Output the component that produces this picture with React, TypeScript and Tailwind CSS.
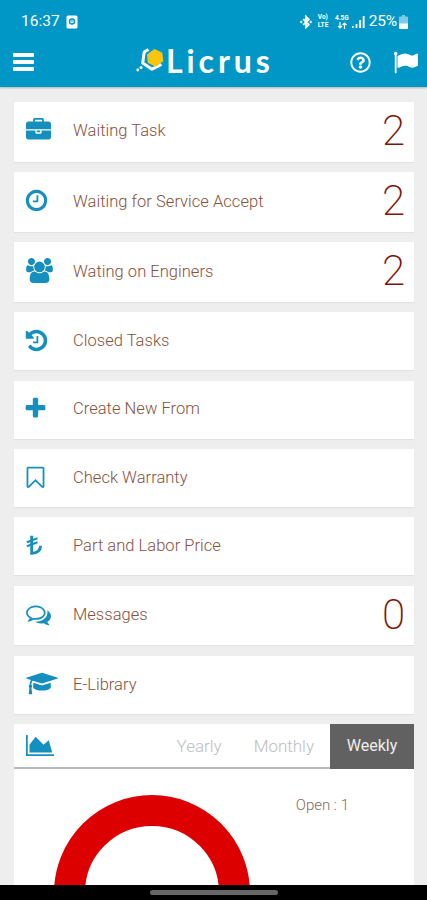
import type { ReactNode } from "react";
import { FaRegQuestionCircle } from "react-icons/fa";

interface GlyphProps {
  d: string;
  width?: number;
  className?: string;
}

// Glyphs share a 1792 unit tall grid, only the width differs
function Glyph({ d, width = 1792, className }: GlyphProps) {
  return (
    <svg viewBox={`0 0 ${width} 1792`} fill="currentColor" className={className} aria-hidden="true">
      <path d={d} />
    </svg>
  );
}

const paths = {
  briefcase:
    "M640 256h512v-128h-512v128zm1152 640v480q0 66-47 113t-113 47h-1472q-66 0-113-47t-47-113v-480h672v160q0 26 19 45t45 19h320q26 0 45-19t19-45v-160h672zm-768 0v128h-256v-128h256zm768-480v384h-1792v-384q0-66 47-113t113-47h352v-160q0-40 28-68t68-28h576q40 0 68 28t28 68v160h352q66 0 113 47t47 113z",
  clock:
    "M1024 544v448q0 14-9 23t-23 9h-320q-14 0-23-9t-9-23v-64q0-14 9-23t23-9h224v-352q0-14 9-23t23-9h64q14 0 23 9t9 23zm416 352q0-148-73-273t-198-198-273-73-273 73-198 198-73 273 73 273 198 198 273 73 273-73 198-198 73-273zm224 0q0 209-103 385.5t-279.5 279.5-385.5 103-385.5-103-279.5-279.5-103-385.5 103-385.5 279.5-279.5 385.5-103 385.5 103 279.5 279.5 103 385.5z",
  users:
    "M593 896q-162 5-265 128h-134q-82 0-138-40.5t-56-118.5q0-353 124-353 6 0 43.5 21t97.5 42.5 119 21.5q67 0 133-23-5 37-5 66 0 139 81 256zm1071 637q0 120-73 189.5t-194 69.5h-874q-121 0-194-69.5t-73-189.5q0-53 3.5-103.5t14-109 26.5-108.5 43-97.5 62-81 85.5-53.5 111.5-20q10 0 43 21.5t73 48 107 48 135 21.5 135-21.5 107-48 73-48 43-21.5q61 0 111.5 20t85.5 53.5 62 81 43 97.5 26.5 108.5 14 109 3.5 103.5zm-1024-1277q0 106-75 181t-181 75-181-75-75-181 75-181 181-75 181 75 75 181zm704 384q0 159-112.5 271.5t-271.5 112.5-271.5-112.5-112.5-271.5 112.5-271.5 271.5-112.5 271.5 112.5 112.5 271.5zm576 225q0 78-56 118.5t-138 40.5h-134q-103-123-265-128 81-117 81-256 0-29-5-66 66 23 133 23 59 0 119-21.5t97.5-42.5 43.5-21q124 0 124 353zm-128-609q0 106-75 181t-181 75-181-75-75-181 75-181 181-75 181 75 75 181z",
  history:
    "M1664 896q0 156-61 298t-164 245-245 164-298 61q-172 0-327-72.5t-264-204.5q-7-10-6.5-22.5t8.5-20.5l137-138q10-9 25-9 16 2 23 12 73 95 179 147t225 52q104 0 198.5-40.5t163.5-109.5 109.5-163.5 40.5-198.5-40.5-198.5-109.5-163.5-163.5-109.5-198.5-40.5q-98 0-188 35.5t-160 101.5l137 138q31 30 14 69-17 40-59 40h-448q-26 0-45-19t-19-45v-448q0-42 40-59 39-17 69 14l130 129q107-101 244.5-156.5t284.5-55.5q156 0 298 61t245 164 164 245 61 298zm-640-288v448q0 14-9 23t-23 9h-320q-14 0-23-9t-9-23v-64q0-14 9-23t23-9h224v-352q0-14 9-23t23-9h64q14 0 23 9t9 23z",
  plus: "M1600 736v192q0 40-28 68t-68 28h-416v416q0 40-28 68t-68 28h-192q-40 0-68-28t-28-68v-416h-416q-40 0-68-28t-28-68v-192q0-40 28-68t68-28h416v-416q0-40 28-68t68-28h192q40 0 68 28t28 68v416h416q40 0 68 28t28 68z",
  bookmark:
    "M1408 256h-1024v1242l423-406 89-85 89 85 423 406v-1242zm12-128q23 0 44 9 33 13 52.5 41t19.5 62v1289q0 34-19.5 62t-52.5 41q-19 8-44 8-48 0-83-32l-441-424-441 424q-36 33-83 33-23 0-44-9-33-13-52.5-41t-19.5-62v-1289q0-34 19.5-62t52.5-41q21-9 44-9h1048z",
  comments:
    "M704 384q-153 0-286 52t-211.5 141-78.5 191q0 82 53 158t149 132l97 56-35 84q34-20 62-39l44-31 53 10q78 14 153 14 153 0 286-52t211.5-141 78.5-191-78.5-191-211.5-141-286-52zm0-128q191 0 353.5 68.5t256.5 186.5 94 257-94 257-256.5 186.5-353.5 68.5q-86 0-176-16-124 88-278 128-36 9-86 16h-3q-11 0-20.5-8t-11.5-21q-1-3-1-6.5t.5-6.5 2-6l2.5-5 3.5-5.5 4-5 4.5-5 4-4.5q5-6 23-25t26-29.5 22.5-29 25-38.5 20.5-44q-124-72-195-177t-71-224q0-139 94-257t256.5-186.5 353.5-68.5zm822 1169q10 24 20.5 44t25 38.5 22.5 29 26 29.5 23 25q1 1 4 4.5t4.5 5 4 5 3.5 5.5l2.5 5 2 6 .5 6.5-1 6.5q-3 14-13 22t-22 7q-50-7-86-16-154-40-278-128-90 16-176 16-271 0-472-132 58 4 88 4 161 0 309-45t264-129q125-92 192-212t67-254q0-77-23-152 129 71 204 178t75 230q0 120-71 224.5t-195 176.5z",
  graduation:
    "M1774 836l18 316q4 69-82 128t-235 93.5-323 34.5-323-34.5-235-93.5-82-128l18-316 574 181q22 7 48 7t48-7zm530-324q0 23-22 31l-1120 352q-4 1-10 1t-10-1l-652-206q-43 34-71 111.5t-34 178.5q63 36 63 109 0 69-58 107l58 433q2 14-8 25-9 11-24 11h-192q-15 0-24-11-10-11-8-25l58-433q-58-38-58-107 0-73 65-111 11-207 98-330l-333-104q-22-8-22-31t22-31l1120-352q4-1 10-1t10 1l1120 352q22 8 22 31z",
  chart: "M2048 1536v128h-2048v-1536h128v1408h1920zm-384-1024l256 896h-1664v-576l448-576 576 576z",
  flag: "M320 256q0 72-64 110v1266q0 13-9.5 22.5t-22.5 9.5h-64q-13 0-22.5-9.5t-9.5-22.5v-1266q-64-38-64-110 0-53 37.5-90.5t90.5-37.5 90.5 37.5 37.5 90.5zm1472 64v763q0 25-12.5 38.5t-39.5 27.5q-215 116-369 116-61 0-123.5-22t-108.5-48-115.5-48-142.5-22q-192 0-464 146-17 9-33 9-26 0-45-19t-19-45v-742q0-32 31-55 21-14 79-43 236-120 421-120 107 0 200 29t219 88q38 19 88 19 54 0 117.5-21t110-47 88-47 54.5-21q26 0 45 19t19 45z",
};

function LiraIcon() {
  return (
    <svg viewBox="0 0 17 21" className="h-[21px] w-[17px]" fill="none" stroke="currentColor" aria-hidden="true">
      <path d="M5.7 .8V18.3C11 18.2 14.4 15.6 14.6 10.8" strokeWidth="2.9" />
      <path d="M.8 7.2L11.5 3.3M.8 11.2L11.5 7.3" strokeWidth="2" />
    </svg>
  );
}

interface MenuItem {
  label: string;
  icon: ReactNode;
  count?: number;
}

const menuItems: MenuItem[] = [
  { label: "Waiting Task", icon: <Glyph d={paths.briefcase} className="size-[25px]" />, count: 2 },
  {
    label: "Waiting for Service Accept",
    icon: <Glyph d={paths.clock} className="-ml-[2px] size-[25px]" />,
    count: 2,
  },
  {
    label: "Wating on Enginers",
    icon: <Glyph d={paths.users} width={1920} className="h-[25px] w-[27px]" />,
    count: 2,
  },
  { label: "Closed Tasks", icon: <Glyph d={paths.history} className="-ml-[2px] size-[25px]" /> },
  { label: "Create New From", icon: <Glyph d={paths.plus} className="-ml-[3px] size-[25px]" /> },
  { label: "Check Warranty", icon: <Glyph d={paths.bookmark} className="-ml-[3px] size-[25px]" /> },
  { label: "Part and Labor Price", icon: <LiraIcon /> },
  { label: "Messages", icon: <Glyph d={paths.comments} className="size-[25px]" />, count: 0 },
  {
    label: "E-Library",
    icon: <Glyph d={paths.graduation} width={2304} className="h-[25px] w-[32px]" />,
  },
];

function StatusBar() {
  return (
    <div className="flex h-[43px] items-center pl-[21px] pr-[19px] text-white">
      <span className="text-[15.5px]">16:37</span>
      <svg viewBox="0 0 12 14" className="ml-[6px] h-[14px] w-3" aria-hidden="true">
        <rect x=".5" y=".5" width="11" height="13" rx="1.5" fill="#fff" />
        <circle cx="6" cy="6.5" r="2.5" fill="none" stroke="#0097c7" strokeWidth="1.5" />
        <path d="M6 5v2" stroke="#0097c7" />
      </svg>
      <div className="ml-auto flex items-center">
        <svg viewBox="0 0 12 14" className="h-[14px] w-3" fill="none" stroke="#fff" aria-hidden="true">
          <path d="M3.2 4.2L8.8 9.6 6 12.5V1.5L8.8 4.4 3.2 9.8" strokeWidth="1.8" />
          <circle cx="1.3" cy="7" r=".8" fill="#fff" />
          <circle cx="10.7" cy="7" r=".8" fill="#fff" />
        </svg>
        <div className="ml-[6px] flex w-[13px] flex-col gap-px text-[6.5px] font-bold leading-[7px]">
          <span>Vo)</span>
          <span>LTE</span>
        </div>
        <div className="ml-[4px] flex w-[14px] flex-col items-center text-[6.5px] font-bold leading-[7px]">
          <span>4.5G</span>
          <svg viewBox="0 0 10 7" className="h-[7px] w-[10px]" fill="none" stroke="#fff" aria-hidden="true">
            <path d="M3 0v6M1 4l2 2 2-2M7.5 7V1M5.5 3l2-2 2 2" strokeWidth="1.2" />
          </svg>
        </div>
        <svg viewBox="0 0 13 12" className="ml-[3px] h-3 w-[13px]" fill="#fff" aria-hidden="true">
          <path d="M0 10h1.6v2H0zM3.6 8h1.8v4H3.6zM7.2 4h1.9v8H7.2zM10.7 0h1.9v12h-1.9z" />
        </svg>
        <span className="ml-[4px] text-[15.5px] tracking-[-0.2px]">25%</span>
        <svg viewBox="0 0 9 14" className="ml-[2px] h-[14px] w-[9px]" aria-hidden="true">
          <path d="M3 0h3v1.5h2q1 0 1 1V9H0V2.5q0-1 1-1h2z" fill="#fff" opacity=".5" />
          <path d="M0 8.5h9V13q0 1-1 1H1q-1 0-1-1z" fill="#fff" />
        </svg>
      </div>
    </div>
  );
}

function Logo() {
  return (
    <div className="flex items-center text-white">
      <svg viewBox="0 0 30 30" className="h-[30px] w-[30px]" aria-hidden="true">
        <path
          d="M12.5 3.5L8.2 6 6.7 17l9.3 6.2 9.5-4.7"
          fill="none"
          stroke="#fff"
          strokeWidth="3"
          strokeLinejoin="round"
        />
        <path d="M18.5 3l7.8 3.8 1 8.5-7.7 5.500-7.800-4L11 8.500z" fill="#fbc50e" />
        <circle cx="5" cy="21.5" r="1.5" fill="#fff" />
        <circle cx="1.8" cy="24" r="1.4" fill="#fff" />
      </svg>
      <span className="font-['Lato',sans-serif] text-[32px] font-bold leading-[40px] tracking-[3.9px]">
        Licrus
      </span>
    </div>
  );
}

function Header() {
  return (
    <header className="h-[87px] shrink-0 bg-[#0097c7] shadow-[0_1px_2px_rgba(0,0,0,0.25)]">
      <StatusBar />
      <div className="flex h-[38px] items-center pl-[13px] pr-[9px] text-white">
        <div className="flex w-[21px] flex-col gap-[3px]">
          <div className="h-[4px] rounded-[1px] bg-white" />
          <div className="h-[4px] rounded-[1px] bg-white" />
          <div className="h-[4px] rounded-[1px] bg-white" />
        </div>
        <div className="-mt-[2px] ml-[102px]">
          <Logo />
        </div>
        <FaRegQuestionCircle className="ml-auto size-[21px]" />
        <Glyph d={paths.flag} className="ml-[22px] size-[25px]" />
      </div>
    </header>
  );
}

function MenuCard({ label, icon, count }: MenuItem) {
  const hasCount = count !== undefined;

  return (
    <div
      className={`flex shrink-0 items-center bg-white pb-[2px] pl-[12px] pr-[9px] shadow-[0_1px_1px_rgba(0,0,0,0.05)] ${
        hasCount ? "h-[59.6px]" : "h-[57.9px]"
      }`}
    >
      <div className="flex w-[47px] items-center text-[#158fbe]">{icon}</div>
      <span className="pt-[2px] text-[16.5px] font-light tracking-[0.03px] text-[#85523d]">{label}</span>
      {hasCount && (
        <span className="ml-auto text-[42px] font-extralight leading-[56px] text-[#7d1508]">
          {count}
        </span>
      )}
    </div>
  );
}

function ChartPanel() {
  return (
    <section className="min-h-0 flex-1 overflow-hidden bg-white">
      <div className="flex h-[45px] items-stretch border-b-2 border-[#bbbbbb] pl-[12px] text-[17px] font-light text-[#bdbdbd]">
        <div className="flex items-center text-[#158fbe]">
          <Glyph d={paths.chart} width={2048} className="h-[25px] w-[28px]" />
        </div>
        <div className="ml-auto flex items-center px-[16px] pt-px">Yearly</div>
        <div className="flex items-center px-[16px] pt-px">Monthly</div>
        <div className="-mb-[2px] flex w-[84px] items-center justify-center bg-[#616161] pb-[2px] text-[16px] font-normal text-[#eeeeee]">
          Weekly
        </div>
      </div>
      <div className="flex items-start justify-between pl-[40px] pr-[65px] pt-[26px]">
        <svg viewBox="0 0 196 196" className="size-[196px]" aria-hidden="true">
          <circle cx="98" cy="98" r="82.5" fill="none" stroke="#dd0000" strokeWidth="31" />
        </svg>
        <span className="text-[15px] font-light leading-5 text-[#85695d]">Open : 1</span>
      </div>
    </section>
  );
}

export default function App() {
  return (
    <div className="flex h-[900px] w-[427px] flex-col overflow-hidden bg-[#eeeeee] font-['Roboto',sans-serif]">
      <Header />
      <main className="flex min-h-0 flex-1 flex-col gap-[10.5px] pl-[14px] pr-[13px] pt-[15px]">
        {menuItems.map((item) => (
          <MenuCard key={item.label} {...item} />
        ))}
        <ChartPanel />
      </main>
      <div className="flex h-[15px] shrink-0 justify-center bg-black pt-[5px]">
        <div className="h-[5px] w-[128px] rounded-full bg-[#666666]" />
      </div>
    </div>
  );
}
